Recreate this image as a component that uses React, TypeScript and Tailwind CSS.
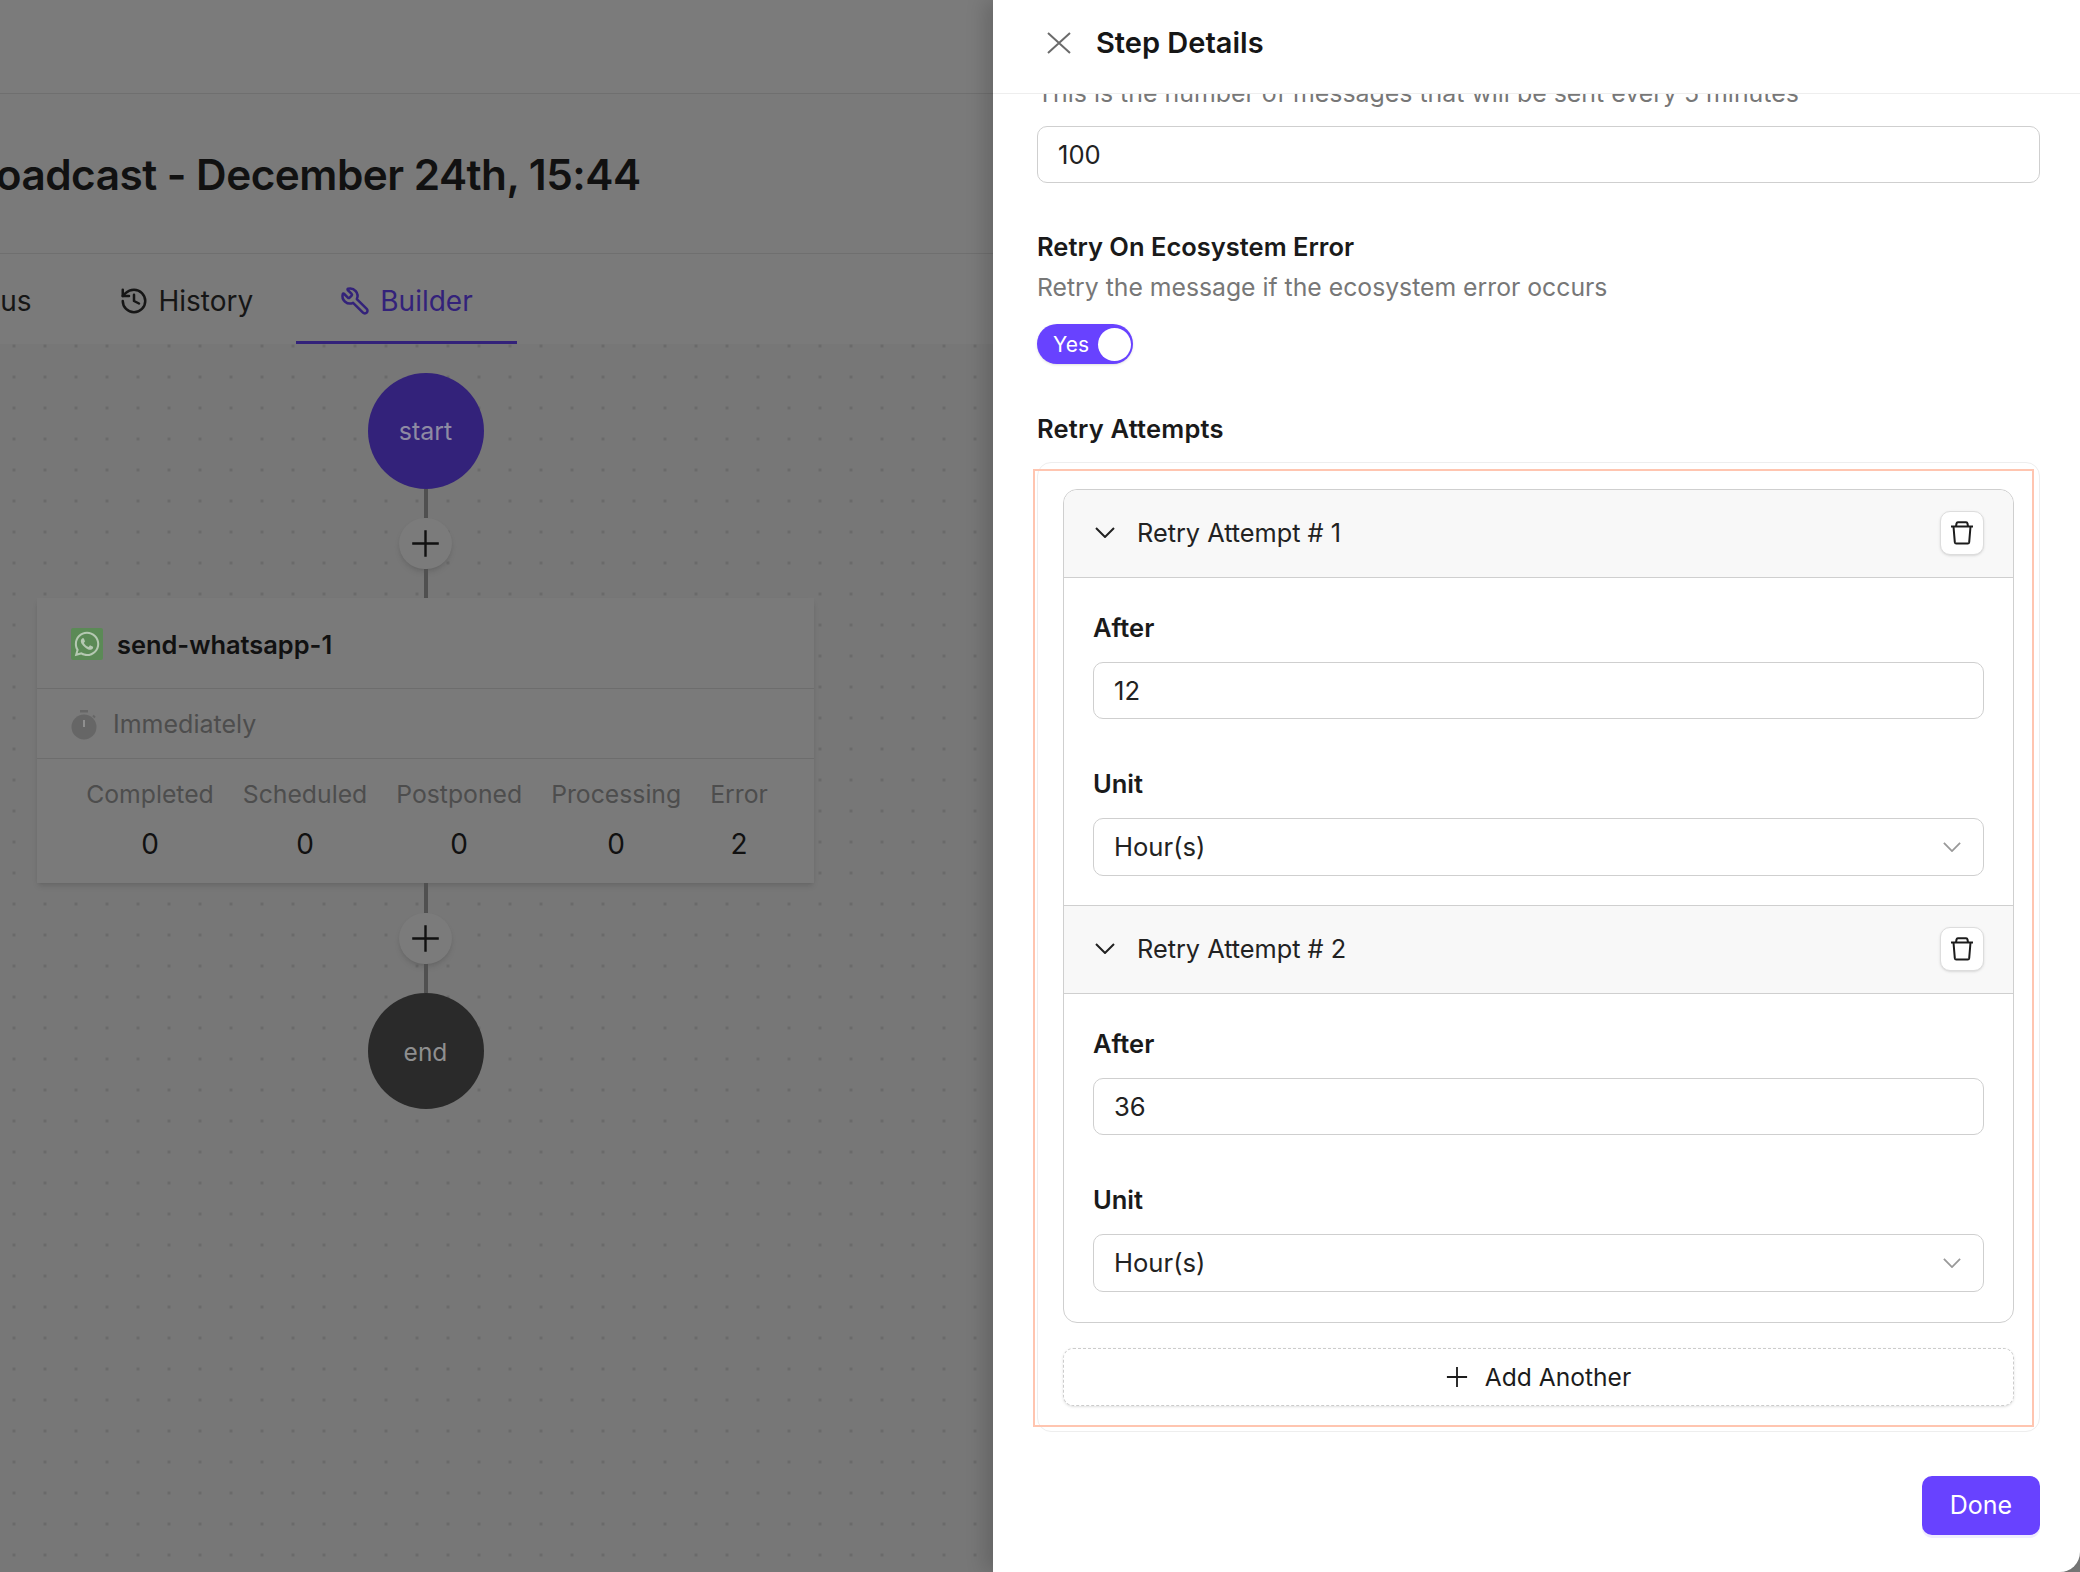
import { History, Wrench } from "lucide-react";
import { FaWhatsapp } from "react-icons/fa";

const PlusIcon = ({ className }: { className: string }) => (
  <svg viewBox="0 0 24 24" fill="none" stroke="currentColor" strokeWidth="2" className={className}>
    <path d="M12 1v22M1 12h22" />
  </svg>
);

const ChevronIcon = ({ className }: { className: string }) => (
  <svg viewBox="0 0 20 11" fill="none" stroke="currentColor" strokeWidth="2" className={className}>
    <path d="M1 1l9 9 9-9" />
  </svg>
);

const TrashIcon = () => (
  <svg viewBox="0 0 24 24" fill="none" stroke="#1c1c1c" strokeWidth="2" className="w-6 h-6">
    <path d="M1 5.500h22" />
    <path d="M3.500 5.500l1.300 15.700a1.500 1.500 0 0 0 1.500 1.300h11.400a1.500 1.500 0 0 0 1.500-1.300l1.300-15.700" />
    <path d="M6 5.500l.5-3a1.500 1.500 0 0 1 1.500-1.200h8a1.500 1.500 0 0 1 1.500 1.200l.5 3" />
  </svg>
);

const StopwatchIcon = () => (
  <svg viewBox="0 0 26 30" className="w-[26px] h-[30px]">
    <rect x="9" y="0" width="8" height="2.500" fill="#666666" />
    <circle cx="13" cy="17" r="12.500" fill="#666666" />
    <path d="M22 5.500l2 2" stroke="#666666" strokeWidth="2" />
    <rect x="12.200" y="10" width="1.600" height="7" fill="#9a9a9a" />
  </svg>
);

const FieldLabel = ({ text, className = "" }: { text: string; className?: string }) => (
  <div className={`text-[25.500px] leading-9 font-semibold text-[#1a1a1a] ${className}`}>{text}</div>
);

const TextBox = ({ value }: { value: string }) => (
  <div className="h-[57px] rounded-[10px] border border-[#cfcfcf] flex items-center pl-[20px] pt-[1px] text-[25.600px] text-[#222222]">{value}</div>
);

const Attempt = ({ index, after, last }: { index: number; after: string; last?: boolean }) => (
  <div>
    <div className={`bg-[#f8f8f8] border-b border-[#cfcfcf] flex items-center pl-[31px] pr-[29px] pb-[2px] ${last ? "h-[89px] border-t" : "h-[88px] rounded-t-[14px]"}`}>
      <ChevronIcon className="w-[20px] h-[11px] text-[#222222]" />
      <span className="ml-[22px] text-[25.300px] text-[#222222] flex-1">Retry Attempt # {index}</span>
      <button className="w-11 h-11 rounded-[10px] bg-white border border-[#dddddd] shadow-sm flex items-center justify-center">
        <TrashIcon />
      </button>
    </div>
    <div className={`px-[29px] pt-[32px] ${last ? "pb-[30px]" : "pb-[29px]"}`}>
      <FieldLabel text="After" />
      <div className="mt-[16px]">
        <TextBox value={after} />
      </div>
      <FieldLabel text="Unit" className="mt-[47px]" />
      <div className="mt-[16px] h-[58px] rounded-[10px] border border-[#cfcfcf] flex items-center justify-between pl-[20px] pr-[22px] text-[25.600px] text-[#222222]">
        <span>Hour(s)</span>
        <ChevronIcon className="w-[18px] h-[10px] text-[#999999]" />
      </div>
    </div>
  </div>
);

const stats = [
  { label: "Completed", value: "0" },
  { label: "Scheduled", value: "0" },
  { label: "Postponed", value: "0" },
  { label: "Processing", value: "0" },
  { label: "Error", value: "2" },
];

const Connector = ({ height }: { height: string }) => <div className={`w-1 bg-[#505050] ${height}`} />;

const AddNode = () => (
  <div className="w-[53px] h-[51px] rounded-full bg-[#7b7b7b] shadow-md flex items-center justify-center">
    <PlusIcon className="w-[29px] h-[29px] text-[#111111]" />
  </div>
);

export default function App() {
  return (
    <div className="w-full h-screen flex overflow-hidden bg-[#777777] font-['Inter',sans-serif]">
      <div className="flex-1 min-w-0 flex flex-col overflow-hidden">
        <div className="h-[94px] shrink-0 bg-[#7b7b7b] border-b border-[#6f6f6f]" />
        <div className="h-[160px] shrink-0 bg-[#7a7a7a] border-b border-[#6f6f6f] flex items-center pt-[2px]">
          <h1 className="-ml-[47px] whitespace-nowrap text-[42.300px] font-semibold tracking-[-0.5px] text-[#111111]">
            Broadcast - December 24th, 15:44
          </h1>
        </div>
        <div className="h-[90px] shrink-0 bg-[#7a7a7a] flex items-stretch text-[28px] text-[#161616]">
          <div className="-ml-[52px] flex items-center pt-[4px] pr-[48px]">Status</div>
          <div className="flex items-center gap-[9px] pl-[40px] pr-[43px] pt-[4px]">
            <History size={30} strokeWidth={2} />
            <span>History</span>
          </div>
          <div className="flex items-center gap-[10px] pl-[44px] pr-[44px] pt-[6px] border-b-[3px] border-[#33227a] text-[#33227a]">
            <Wrench size={30} strokeWidth={2} className="-scale-x-100" />
            <span>Builder</span>
          </div>
        </div>
        <div className="flex-1 bg-[#777777] bg-[radial-gradient(#6a6a6a_1.5px,transparent_1.5px)] bg-[size:31px_31px] bg-[position:-1.500px_-13.500px] pt-[29px] pl-[37px]">
          <div className="w-[777px] flex flex-col items-center">
            <div className="w-[116px] h-[116px] rounded-full bg-[#33227a] flex items-center justify-center pt-[2px] text-[25px] text-[#8e8aa3]">start</div>
            <Connector height="h-[29px]" />
            <AddNode />
            <Connector height="h-[29px]" />
            <div className="w-full bg-[#7a7a7a] shadow-md">
              <div className="h-[91px] border-b border-[#6d6d6d] flex items-center pl-[34px] pt-[1px]">
                <div className="w-8 h-8 rounded-[2px] bg-[#5b8a56] flex items-center justify-center">
                  <FaWhatsapp size={28} className="text-[#b5c8b2]" />
                </div>
                <span className="ml-[14px] pt-[3px] text-[25.400px] font-semibold text-[#111111]">send-whatsapp-1</span>
              </div>
              <div className="h-[70px] border-b border-[#6d6d6d] flex items-center pl-[34px] pt-[2px] gap-[16px] text-[25px] text-[#4d4d4d]">
                <StopwatchIcon />
                <span>Immediately</span>
              </div>
              <div className="h-[124px] flex justify-center gap-[29px] pl-[3px] pt-[17px]">
                {stats.map((stat) => (
                  <div key={stat.label} className="flex flex-col items-center">
                    <span className="text-[24.750px] leading-9 text-[#4d4d4d]">{stat.label}</span>
                    <span className="mt-[14px] text-[28px] leading-9 text-[#111111]">{stat.value}</span>
                  </div>
                ))}
              </div>
            </div>
            <Connector height="h-[30px]" />
            <AddNode />
            <Connector height="h-[29px]" />
            <div className="w-[116px] h-[116px] rounded-full bg-[#2a2a2a] flex items-center justify-center pt-[2px] text-[24.500px] text-[#8f8f8f]">end</div>
          </div>
        </div>
      </div>

      <div className="w-[1087px] shrink-0 h-full bg-white rounded-br-[20px] flex flex-col shadow-[-8px_0_20px_rgba(0,0,0,0.16)]">
        <div className="h-[94px] shrink-0 border-b border-[#eeeeee] flex items-center pl-[54px] pb-[8px]">
          <svg viewBox="0 0 24 22" fill="none" stroke="#6b6b6b" strokeWidth="2" className="w-[24px] h-[22px]">
            <path d="M1 1l22 20M23 1L1 21" />
          </svg>
          <span className="ml-[25px] text-[29px] font-semibold text-[#161616]">Step Details</span>
        </div>
        <div className="flex-1 min-h-0 overflow-hidden pl-[44px] pr-[40px]">
          <p className="-mt-[19px] text-[24.900px] leading-9 text-[#777777]">
            This is the number of messages that will be sent every 5 minutes
          </p>
          <div className="mt-[15px]">
            <TextBox value="100" />
          </div>
          <FieldLabel text="Retry On Ecosystem Error" className="mt-[46px]" />
          <p className="mt-[4px] text-[24.750px] leading-9 text-[#777777]">Retry the message if the ecosystem error occurs</p>
          <div className="mt-[19px] w-[96px] h-10 rounded-full bg-[#6842ff] flex items-center justify-between pl-[16px] pr-[2px] text-[21px] text-white shadow-sm">
            <span className="pt-[1px]">Yes</span>
            <span className="w-[33px] h-[33px] rounded-full bg-white" />
          </div>
          <FieldLabel text="Retry Attempts" className="mt-[47px] tracking-[0.2px]" />

          <div className="relative mt-[15px] rounded-[14px] border border-[#eeeeee] px-[25px] pt-[26px] pb-[25px]">
            <div className="rounded-[14px] border border-[#cfcfcf]">
              <Attempt index={1} after="12" />
              <Attempt index={2} after="36" last />
            </div>
            <div className="mt-[25px] h-[58px] rounded-[10px] border border-dashed border-[#cccccc] shadow-sm flex items-center justify-center gap-[17px] text-[24.600px] text-[#1c1c1c]">
              <PlusIcon className="w-[22px] h-[22px]" />
              <span>Add Another</span>
            </div>
            <div className="absolute -left-[5px] top-[6px] right-[5px] bottom-[4px] border-2 border-[#ffc5b0] pointer-events-none" />
          </div>

          <div className="mt-[44px] flex justify-end">
            <button className="w-[118px] h-[59px] rounded-[10px] bg-[#6842ff] text-[25px] text-white shadow-[0_3px_0_rgba(104,66,255,0.1)]">Done</button>
          </div>
        </div>
      </div>
    </div>
  );
}
